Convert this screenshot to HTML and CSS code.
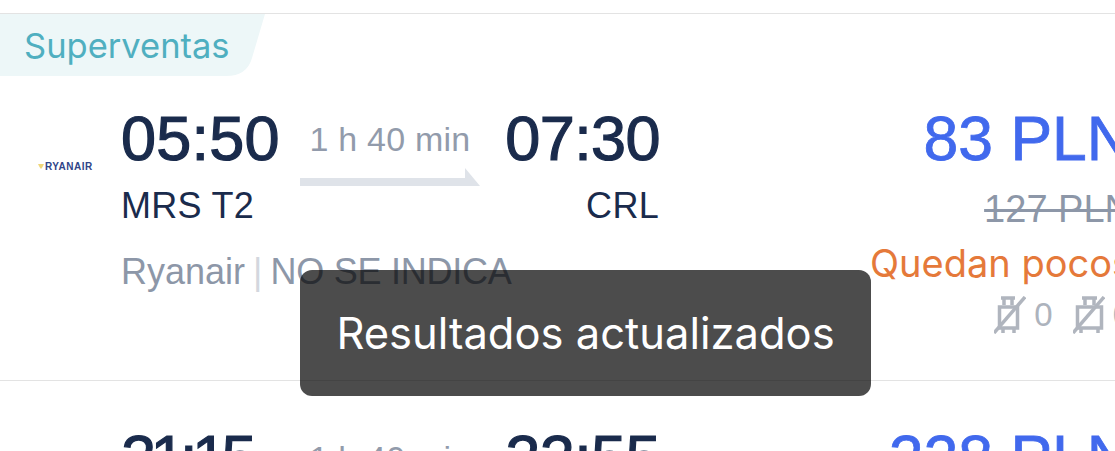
FILE: index.html
```html
<!DOCTYPE html>
<html lang="es">
<head>
	<meta charset="UTF-8">
	<title>Vuelos</title>
	<link rel="stylesheet" href="styles.css">
</head>
<body>
	<div class="list">
		<div class="card">
			<div class="tag">Superventas</div>
			<div class="flight flight-first">
				<div class="logo">
					<svg class="harp" width="6" height="5" viewBox="0 0 6 5"><path d="M0 0h6L4.500 3 3 5 1.500 3z" fill="#f0d67a"/></svg>
					<span class="logo-text">RYANAIR</span>
				</div>
				<div class="info">
					<div class="times">
						<div class="time">05:50</div>
						<div class="duration">
							<div class="duration-text">1 h 40 min</div>
							<svg class="arrow" width="180" height="18" viewBox="0 0 180 18"><path d="M0 10H165V0L180 18H0z" fill="#dfe3e9"/></svg>
						</div>
						<div class="time time-end">07:30</div>
					</div>
					<div class="airports">
						<div class="airport">MRS T2</div>
						<div class="airport">CRL</div>
					</div>
					<div class="carrier">Ryanair<span class="sep">|</span><span class="cabin">NO SE INDICA</span></div>
				</div>
				<div class="prices">
					<div class="price">83 PLN</div>
					<div class="old-price">127 PLN</div>
					<div class="few">Quedan pocos</div>
					<div class="bags">
						<svg class="bag" width="32" height="38" viewBox="0 0 32 38">
							<path d="M10 9V2M18 9V2M7 2H21" stroke="#b0b5be" stroke-width="3.500" fill="none"/>
							<path d="M5.500 11H23.500V32H5.500z" stroke="#b0b5be" stroke-width="3.500" fill="none"/>
							<path d="M9 33v4M20 33v4" stroke="#b0b5be" stroke-width="3.500"/>
							<path d="M31 1L0 37" stroke="#b0b5be" stroke-width="3.500"/>
						</svg>
						<span class="bag-count">0</span>
						<svg class="bag" width="32" height="38" viewBox="0 0 32 38">
							<path d="M12 9V2M21 9V2M9 2H24" stroke="#b0b5be" stroke-width="3.500" fill="none"/>
							<path d="M4.500 11H28.500V32H4.500z" stroke="#b0b5be" stroke-width="3.500" fill="none"/>
							<path d="M8 33v4M25 33v4" stroke="#b0b5be" stroke-width="3.500"/>
							<path d="M31 1L0 37" stroke="#b0b5be" stroke-width="3.500"/>
						</svg>
						<span class="bag-count">0</span>
					</div>
				</div>
			</div>
		</div>
		<div class="card">
			<div class="flight">
				<div class="logo"></div>
				<div class="info">
					<div class="times">
						<div class="time time-tight">21:15</div>
						<div class="duration">
							<div class="duration-text">1 h 40 min</div>
						</div>
						<div class="time time-end">22:55</div>
					</div>
				</div>
				<div class="prices">
					<div class="price">228 PLN</div>
				</div>
			</div>
		</div>
	</div>
	<div class="toast">Resultados actualizados</div>
</body>
</html>
```

FILE: styles.css
```css
* {
	margin: 0;
	padding: 0;
	box-sizing: border-box;
}

html, body {
	height: 451px;
	overflow: hidden;
	background: #fff;
}

body {
	position: relative;
	font-family: "Liberation Sans", Arial, sans-serif;
	font-size: 36px;
	color: #1a2b4c;
}

.list {
	width: 1132px;
	padding-top: 13px;
}

.card {
	border-top: 1px solid #e3e3e3;
}

.tag {
	width: 265px;
	height: 62px;
	padding-left: 24px;
	font-family: Inter, sans-serif;
	font-size: 34.500px;
	line-height: 64px;
	color: #4fafc0;
	background: #edf7f8;
	clip-path: path('M0 0H265L252 44Q247 62 226 62H0z');
}

.flight {
	display: flex;
	height: 366px;
	padding: 41px 0 0 37px;
}

.flight-first {
	height: 304px;
	padding-top: 27px;
}

.logo {
	display: flex;
	align-items: center;
	flex: none;
	width: 84px;
	height: 20px;
	margin-top: 53px;
}

.harp {
	flex: none;
	margin-left: 1px;
}

.logo-text {
	margin-left: 1px;
	font-size: 10px;
	font-weight: 700;
	letter-spacing: 0.5px;
	color: #2f4488;
}

.info {
	flex: none;
	width: 538px;
}

.times {
	display: grid;
	grid-template-columns: 179px 180px 179px;
}

.time {
	font-size: 63px;
	line-height: 70px;
	letter-spacing: 0.2px;
	-webkit-text-stroke: 1.2px #1a2b4c;
}

.time-end {
	margin-right: -1px;
	text-align: right;
	letter-spacing: -0.6px;
}

.time-tight {
	letter-spacing: -5.500px;
}

.duration {
	text-align: center;
}

.duration-text {
	font-size: 34px;
	line-height: 40px;
	margin-top: 16px;
	letter-spacing: 0.2px;
	color: #929bab;
}

.arrow {
	display: block;
	margin-top: 9px;
}

.airports {
	display: flex;
	justify-content: space-between;
	line-height: 40px;
}

.airport {
	letter-spacing: 0.3px;
}

.carrier {
	margin-top: 26px;
	line-height: 40px;
	color: #8d97a8;
}

.sep {
	margin: 0 8px;
	color: #d3d7de;
}

.cabin {
	letter-spacing: -0.25px;
}

.prices {
	flex: 1;
	text-align: right;
}

.price {
	font-size: 62.500px;
	line-height: 70px;
	color: #4169ed;
	-webkit-text-stroke: 0.8px #4169ed;
}

.old-price {
	margin-top: 16px;
	font-size: 38px;
	line-height: 40px;
	color: #8d97a8;
	text-decoration: line-through;
	text-decoration-thickness: 3px;
}

.few {
	margin-top: 14px;
	font-family: Inter, sans-serif;
	font-size: 38px;
	line-height: 40px;
	color: #e5793a;
}

.bags {
	display: flex;
	justify-content: flex-end;
	align-items: center;
	gap: 8px;
	margin-top: 12px;
}

.bag {
	flex: none;
}

.bag-count {
	font-size: 33px;
	line-height: 40px;
	margin-right: 12px;
	color: #adb3bd;
}

.bag-count:last-child {
	margin-right: 1px;
}

.toast {
	position: absolute;
	left: 300px;
	top: 270px;
	width: 571px;
	height: 126px;
	font-family: Inter, sans-serif;
	font-size: 43.500px;
	line-height: 126px;
	text-align: center;
	color: #fff;
	background: rgba(0, 0, 0, 0.7);
	border-radius: 12px;
}
```
